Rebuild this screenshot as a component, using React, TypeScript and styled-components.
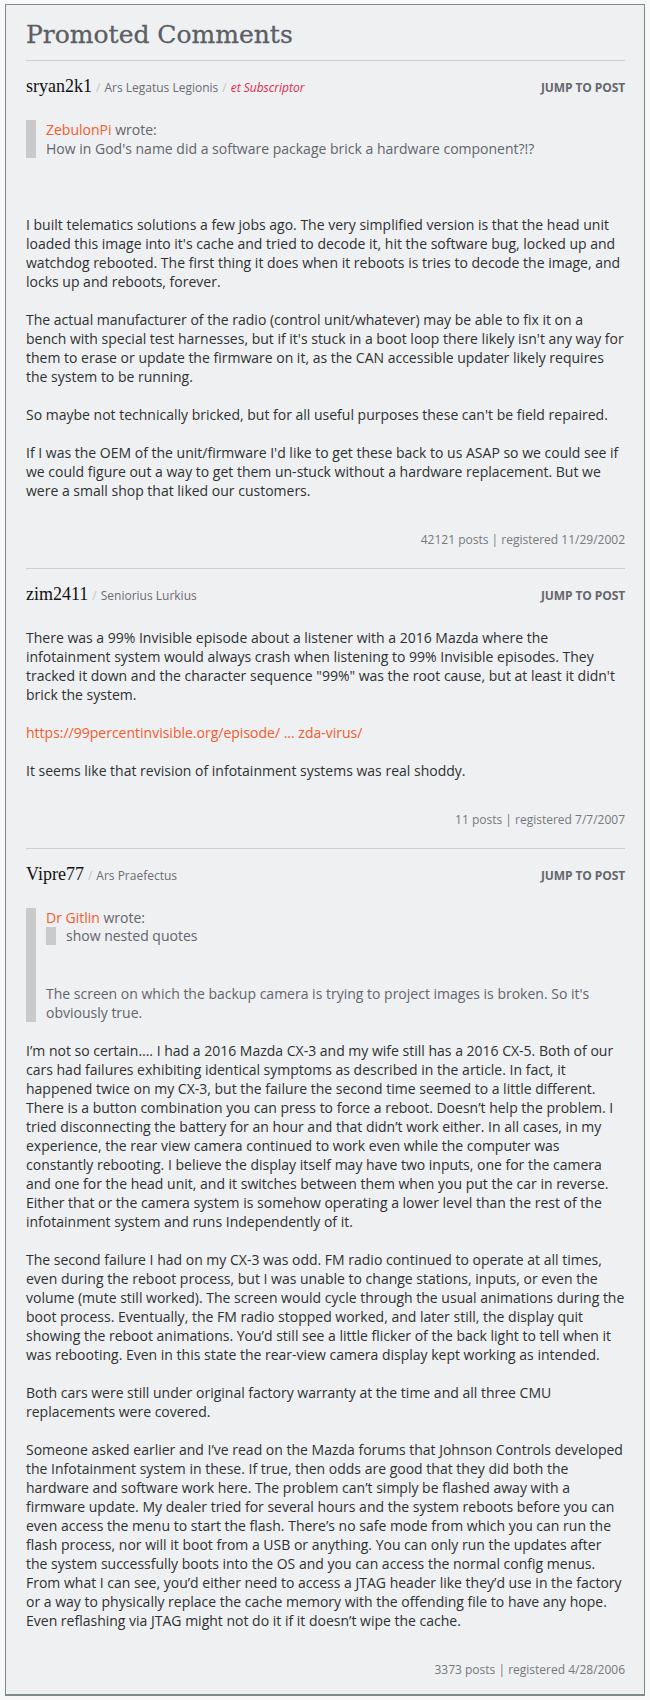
import React from "react";
import styled, { createGlobalStyle } from "styled-components";

const GlobalStyle = createGlobalStyle`
  html, body { margin: 0; padding: 0; background: #f8f8f8; }
  body { font-family: "Open Sans", "Liberation Sans", sans-serif; }
  * { box-sizing: border-box; }
`;

const Page = styled.div`
  padding: 4px 5px 5px 5px;
`;

const Panel = styled.section`
  background: #eff0f2;
  border: 1px solid #7e8b8c;
  border-bottom-width: 2px;
  padding: 15px 19px 0 20px;
`;

const Title = styled.h2`
  margin: 0;
  padding-bottom: 11px;
  font-family: "DejaVu Serif", "Liberation Serif", serif;
  font-weight: normal;
  font-size: 25px;
  line-height: 29px;
  color: #5b5e64;
  -webkit-text-stroke: 0.3px #5b5e64;
`;

const Post = styled.article`
  border-top: 1px solid #cbcdd0;
  padding: 16px 0 19px 0;
  &:last-child { padding-bottom: 15px; }
`;

const Header = styled.header`
  display: flex;
  align-items: center;
  justify-content: space-between;
  height: 20px;
  margin-bottom: 23px;
`;

const Who = styled.div`
  display: flex;
  align-items: baseline;
  line-height: 20px;
`;

const Name = styled.span`
  font-family: "Liberation Serif", "DejaVu Serif", serif;
  font-size: 18px;
  color: #111;
`;

const Sep = styled.span`
  font-size: 12px;
  color: #c2c4c7;
  margin: 0 4px;
`;

const Rank = styled.span<{ $sub?: boolean }>`
  font-size: 12px;
  color: ${(p) => (p.$sub ? "#e8274f" : "#6b6d72")};
  font-style: ${(p) => (p.$sub ? "italic" : "normal")};
`;

const Jump = styled.a`
  font-size: 12px;
  font-weight: bold;
  color: #65676c;
  text-decoration: none;
  letter-spacing: -0.1px;
`;

const Body = styled.div`
  font-size: 14px;
  line-height: 19px;
  color: #2e3033;
  p { margin: 0 0 19px 0; }
  p:last-child { margin-bottom: 0; }
`;

const Quote = styled.blockquote<{ $after: number }>`
  margin: 0 0 ${(p) => p.$after * 19}px 0;
  border-left: 10px solid #cacaca;
  padding-left: 10px;
  color: #62656b;
  font-size: 14px;
  line-height: 19px;
`;

const Nested = styled.div`
  border-left: 10px solid #cacaca;
  padding-left: 10px;
  height: 18px;
  line-height: 18px;
  margin-bottom: 39px;
`;

const Author = styled.span`
  color: #f75a2c;
`;

const Link = styled.a`
  color: #f75a2c;
  text-decoration: none;
`;

const Footer = styled.div`
  margin-top: 30px;
  text-align: right;
  font-size: 12px;
  line-height: 19px;
  color: #75787c;
`;

function PostHead({ name, rank, sub }: { name: string; rank: string; sub?: boolean }) {
  return (
    <Header>
      <Who>
        <Name>{name}</Name>
        <Sep>/</Sep>
        <Rank>{rank}</Rank>
        {sub && (
          <>
            <Sep>/</Sep>
            <Rank $sub>et Subscriptor</Rank>
          </>
        )}
      </Who>
      <Jump href="#">JUMP TO POST</Jump>
    </Header>
  );
}

export default function App() {
  return (
    <>
      <GlobalStyle />
      <Page>
        <Panel>
          <Title>Promoted Comments</Title>

          <Post>
            <PostHead name="sryan2k1" rank="Ars Legatus Legionis" sub />
            <Quote $after={3}>
              <Author>ZebulonPi</Author> wrote:
              <br />
              How in God's name did a software package brick a hardware component?!?
            </Quote>
            <Body>
              <p>
                I built telematics solutions a few jobs ago. The very simplified version is that the head unit loaded this image into it's cache and tried to decode it, hit the software bug, locked up and watchdog rebooted. The first thing it does when it reboots is tries to decode the image, and locks up and reboots, forever.
              </p>
              <p>
                The actual manufacturer of the radio (control unit/whatever) may be able to fix it on a bench with special test harnesses, but if it's stuck in a boot loop there likely isn't any way for them to erase or update the firmware on it, as the CAN accessible updater likely requires the system to be running.
              </p>
              <p>So maybe not technically bricked, but for all useful purposes these can't be field repaired.</p>
              <p>
                If I was the OEM of the unit/firmware I'd like to get these back to us ASAP so we could see if we could figure out a way to get them un-stuck without a hardware replacement. But we were a small shop that liked our customers.
              </p>
            </Body>
            <Footer>42121 posts | registered 11/29/2002</Footer>
          </Post>

          <Post>
            <PostHead name="zim2411" rank="Seniorius Lurkius" />
            <Body>
              <p>
                There was a 99% Invisible episode about a listener with a 2016 Mazda where the infotainment system would always crash when listening to 99% Invisible episodes. They tracked it down and the character sequence "99%" was the root cause, but at least it didn't brick the system.
              </p>
              <p>
                <Link href="#">https://99percentinvisible.org/episode/ ... zda-virus/</Link>
              </p>
              <p>It seems like that revision of infotainment systems was real shoddy.</p>
            </Body>
            <Footer>11 posts | registered 7/7/2007</Footer>
          </Post>

          <Post>
            <PostHead name="Vipre77" rank="Ars Praefectus" />
            <Quote $after={1}>
              <Author>Dr Gitlin</Author> wrote:
              <Nested>show nested quotes</Nested>
              The screen on which the backup camera is trying to project images is broken. So it's obviously true.
            </Quote>
            <Body>
              <p>
                I’m not so certain…. I had a 2016 Mazda CX-3 and my wife still has a 2016 CX-5. Both of our cars had failures exhibiting identical symptoms as described in the article. In fact, it happened twice on my CX-3, but the failure the second time seemed to a little different. There is a button combination you can press to force a reboot. Doesn’t help the problem. I tried disconnecting the battery for an hour and that didn’t work either. In all cases, in my experience, the rear view camera continued to work even while the computer was constantly rebooting. I believe the display itself may have two inputs, one for the camera and one for the head unit, and it switches between them when you put the car in reverse. Either that or the camera system is somehow operating a lower level than the rest of the infotainment system and runs Independently of it.
              </p>
              <p>
                The second failure I had on my CX-3 was odd. FM radio continued to operate at all times, even during the reboot process, but I was unable to change stations, inputs, or even the volume (mute still worked). The screen would cycle through the usual animations during the boot process. Eventually, the FM radio stopped worked, and later still, the display quit showing the reboot animations. You’d still see a little flicker of the back light to tell when it was rebooting. Even in this state the rear-view camera display kept working as intended.
              </p>
              <p>Both cars were still under original factory warranty at the time and all three CMU replacements were covered.</p>
              <p>
                Someone asked earlier and I’ve read on the Mazda forums that Johnson Controls developed the Infotainment system in these. If true, then odds are good that they did both the hardware and software work here. The problem can’t simply be flashed away with a firmware update. My dealer tried for several hours and the system reboots before you can even access the menu to start the flash. There’s no safe mode from which you can run the flash process, nor will it boot from a USB or anything. You can only run the updates after the system successfully boots into the OS and you can access the normal config menus. From what I can see, you’d either need to access a JTAG header like they’d use in the factory or a way to physically replace the cache memory with the offending file to have any hope. Even reflashing via JTAG might not do it if it doesn’t wipe the cache.
              </p>
            </Body>
            <Footer>3373 posts | registered 4/28/2006</Footer>
          </Post>
        </Panel>
      </Page>
    </>
  );
}
